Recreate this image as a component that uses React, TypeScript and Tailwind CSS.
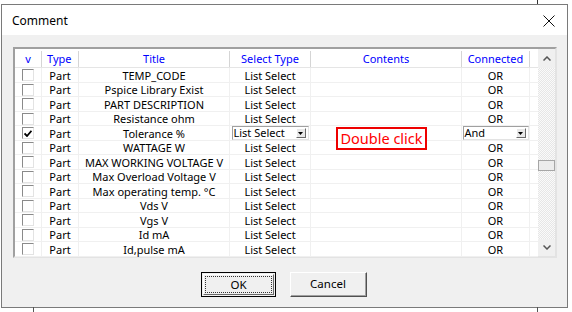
import React from 'react';

type Row = { checked?: boolean; title: string; combo?: boolean };

const rows: Row[] = [
  { title: 'TEMP_CODE' },
  { title: 'Pspice Library Exist' },
  { title: 'PART DESCRIPTION' },
  { title: 'Resistance ohm' },
  { title: 'Tolerance %', checked: true, combo: true },
  { title: 'WATTAGE W' },
  { title: 'MAX WORKING VOLTAGE V' },
  { title: 'Max Overload Voltage V' },
  { title: 'Max operating temp. \u00B0C' },
  { title: 'Vds V' },
  { title: 'Vgs V' },
  { title: 'Id mA' },
  { title: 'Id,pulse mA' },
];

const DropButton = () => (
  <div className="w-[10px] h-[10px] bg-[#e8e8e8] border-t border-l border-t-white border-l-white border-b border-r border-b-[#696969] border-r-[#696969] flex items-center justify-center">
    <svg width="5" height="3" viewBox="0 0 5 3">
      <path d="M0 0h5L2.5 3z" fill="#000" />
    </svg>
  </div>
);

const CheckBox = ({ checked }: { checked?: boolean }) => (
  <div className="w-[12px] h-[12px] bg-white border-t border-l border-t-[#8a8a8a] border-l-[#8a8a8a] border-b border-r border-b-[#e3e3e3] border-r-[#e3e3e3] flex items-center justify-center">
    {checked && (
      <svg width="8" height="7" viewBox="0 0 8 7">
        <path d="M0.5 3.5 L3 6 L7.5 0.8" stroke="#000" strokeWidth="1.8" fill="none" />
      </svg>
    )}
  </div>
);

export default function App() {
  return (
    <div className="relative w-[572px] h-[312px] bg-white overflow-hidden" style={{ fontFamily: '"Noto Sans", "Open Sans", sans-serif' }}>
      {/* stray edges of windows behind */}
      <div className="absolute left-[537px] top-0 w-[1px] h-[4px] bg-[#333]" />
      <div className="absolute left-[33px] top-[307px] w-[1px] h-[5px] bg-[#555]" />
      <div className="absolute left-[537px] top-[307px] w-[1px] h-[5px] bg-[#555]" />

      <div className="ml-[1px] mt-[4px] w-[567px] h-[304px] border border-[#7a7a7a] flex flex-col">
        {/* Title bar */}
        <div className="h-[30px] bg-white flex items-center justify-between pl-[10px] pr-[12px] pt-[1px] shrink-0">
          <span className="text-[12px] text-black">Comment</span>
          <svg width="12" height="12" viewBox="0 0 12 12">
            <path d="M0.5 0.5 L11.5 11.5 M11.5 0.5 L0.5 11.5" stroke="#111" strokeWidth="1" />
          </svg>
        </div>

        {/* Body */}
        <div className="flex-1 bg-[#f0f0f0] pt-[12px] pl-[11px] flex flex-col">
          {/* List view */}
          <div className="w-[544px] h-[211px] border-2 border-t-[#a0a0a0] border-l-[#a0a0a0] border-b-[#e3e3e3] border-r-[#e3e3e3] bg-white flex text-[11px] text-black">
            <div className="w-[523px] flex flex-col">
              {/* Header */}
              <div className="h-[19px] flex items-center border-b border-[#e5e5e5] text-[#0000ff] pt-[2px]">
                <div className="w-[27px] h-full flex items-center justify-center border-r border-[#d5d5d5]">v</div>
                <div className="w-[37px] h-full flex items-center pl-[5px] border-r border-[#d5d5d5]">Type</div>
                <div className="w-[151px] h-full flex items-center justify-center border-r border-[#d5d5d5]">Title</div>
                <div className="w-[81px] h-full flex items-center justify-center border-r border-[#d5d5d5]">Select Type</div>
                <div className="w-[151px] h-full flex items-center justify-center border-r border-[#d5d5d5]">Contents</div>
                <div className="w-[68px] h-full flex items-center justify-center border-r border-[#d5d5d5]">Connected</div>
                <div className="flex-1" />
              </div>

              {/* Rows */}
              {rows.map((r, i) => (
                <div
                  key={r.title}
                  className={`${i % 2 === 0 ? 'h-[15px]' : 'h-[14px]'} flex items-center border-b border-[#f0f0f0]`}
                >
                  <div className="w-[27px] h-full flex items-center justify-center border-r border-[#f0f0f0]">
                    <CheckBox checked={r.checked} />
                  </div>
                  <div className="w-[37px] h-full flex items-center justify-center pt-[2px] border-r border-[#f0f0f0]">Part</div>
                  <div className="w-[151px] h-full flex items-center justify-center pt-[2px] border-r border-[#f0f0f0] whitespace-nowrap">{r.title}</div>
                  <div className={`w-[81px] h-full flex items-center justify-center border-r border-[#f0f0f0] ${r.combo ? '' : 'pt-[2px]'}`}>
                    {r.combo ? (
                      <div className="w-[77px] h-full bg-white border border-t-[#a0a0a0] border-l-[#a0a0a0] border-b-[#e3e3e3] border-r-[#e3e3e3] flex items-center justify-between pl-[1px] pr-[2px]">
                        <span>List Select</span>
                        <DropButton />
                      </div>
                    ) : (
                      'List Select'
                    )}
                  </div>
                  <div className="relative w-[151px] h-full border-r border-[#f0f0f0]">
                    {r.combo && (
                      <div className="absolute left-[25px] top-[1px] w-[91px] h-[23px] border-2 border-[#ee0000] flex items-center justify-center text-[14.5px] text-[#ff0000] z-10 bg-white">
                        Double click
                      </div>
                    )}
                  </div>
                  <div className={`w-[68px] h-full flex items-center justify-center border-r border-[#f0f0f0] ${r.combo ? '' : 'pt-[2px]'}`}>
                    {r.combo ? (
                      <div className="w-[66px] h-full bg-white border border-t-[#a0a0a0] border-l-[#a0a0a0] border-b-[#e3e3e3] border-r-[#e3e3e3] flex items-center justify-between pl-[1px] pr-[2px]">
                        <span>And</span>
                        <DropButton />
                      </div>
                    ) : (
                      'OR'
                    )}
                  </div>
                  <div className="flex-1" />
                </div>
              ))}
            </div>

            {/* Scrollbar */}
            <div className="w-[17px] flex flex-col bg-[#f0f0f0]">
              <div className="h-[19px] flex items-center justify-center bg-[#f0f0f0]">
                <svg width="8" height="5" viewBox="0 0 8 5">
                  <path d="M0.5 4.5 L4 1 L7.5 4.5" stroke="#555" strokeWidth="1.5" fill="none" />
                </svg>
              </div>
              <div className="flex-1 flex flex-col bg-[repeating-conic-gradient(#e6e6e6_0_25%,#fafafa_0_50%)] bg-[length:2px_2px]">
                <div className="h-[92px]" />
                <div className="h-[11px] bg-[#ececec] border border-[#a6a6a6]" />
              </div>
              <div className="h-[17px] flex items-center justify-center bg-[#f0f0f0]">
                <svg width="8" height="5" viewBox="0 0 8 5">
                  <path d="M0.5 0.5 L4 4 L7.5 0.5" stroke="#555" strokeWidth="1.5" fill="none" />
                </svg>
              </div>
            </div>
          </div>

          {/* Buttons */}
          <div className="mt-[14px] flex justify-center gap-[14px] text-[11.5px] text-black pr-[12px]">
            <div className="w-[75px] h-[25px] border border-black bg-[#f0f0f0] p-[1px]">
              <div className="w-full h-full border border-t-white border-l-white border-b-[#696969] border-r-[#696969] p-[1px]">
                <div className="w-full h-full border border-dotted border-[#333] flex items-center justify-center">OK</div>
              </div>
            </div>
            <div className="w-[77px] h-[25px] border border-t-white border-l-white border-b-[#505050] border-r-[#505050] bg-[#f0f0f0] flex items-center justify-center">
              <div className="w-full h-full border-b border-r border-b-[#a0a0a0] border-r-[#a0a0a0] flex items-center justify-center">Cancel</div>
            </div>
          </div>
        </div>
      </div>
    </div>
  );
}
